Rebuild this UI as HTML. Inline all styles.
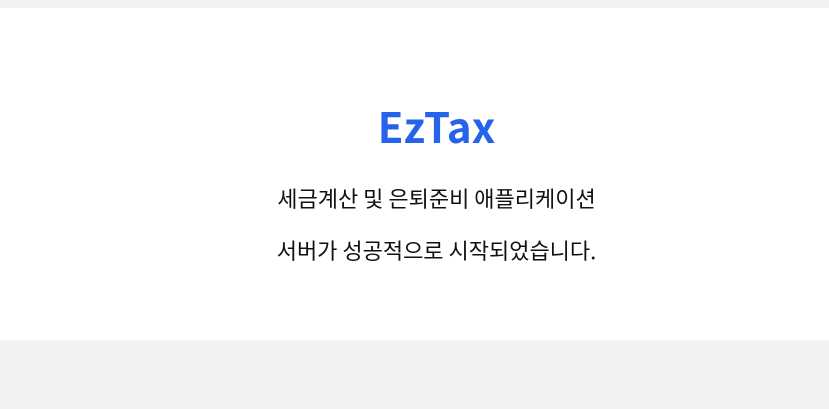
<!DOCTYPE html>
<html><head><meta charset="utf-8"><style>
html,body{margin:0;padding:0;background:#f3f3f3;width:829px;height:409px;overflow:hidden}
.box{position:absolute;left:0;top:8px;width:829px;height:332px;background:#fff}
.t{position:absolute;left:22px;width:829px;text-align:center;font-family:"Noto Sans CJK KR","Liberation Sans",sans-serif;white-space:nowrap}
.h{top:94px;font-size:42px;font-weight:700;color:#2563eb;line-height:64px}
.l{font-size:22px;color:#111;line-height:28px}
</style></head><body>
<div class="box"></div>
<div class="t h">EzTax</div>
<div class="t l" style="top:184px">세금계산 및 은퇴준비 애플리케이션</div>
<div class="t l" style="top:236px">서버가 성공적으로 시작되었습니다.</div>
</body></html>
